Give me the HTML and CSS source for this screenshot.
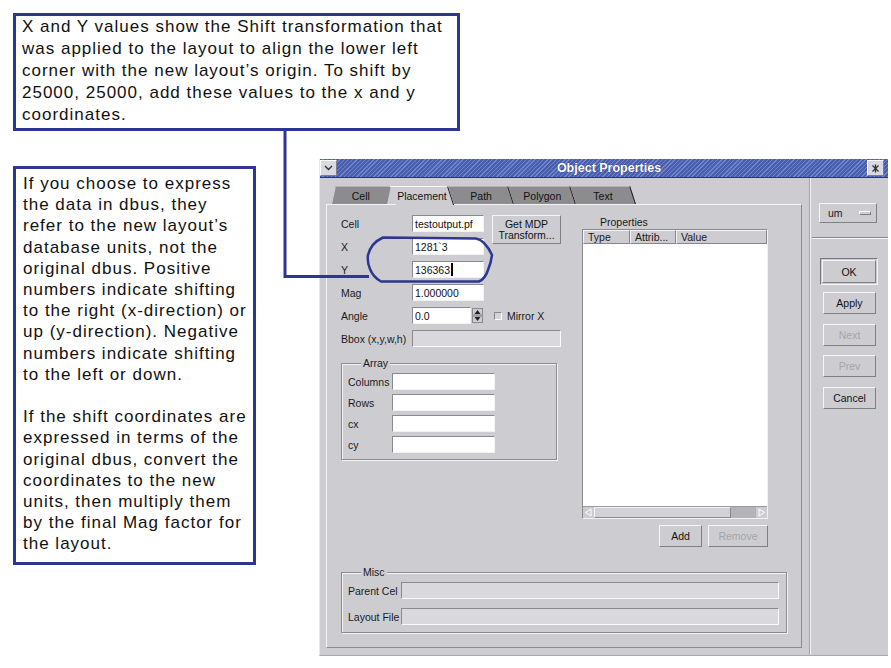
FILE: index.html
```html
<!DOCTYPE html>
<html>
<head>
<meta charset="utf-8">
<title>Object Properties</title>
<link rel="stylesheet" href="styles.css">
</head>
<body>
<div class="stage">
  <div class="note note-top">X and Y values show the Shift transformation that<br>was applied to the layout to align the lower left<br>corner with the new layout’s origin. To shift by<br>25000, 25000, add these values to the x and y<br>coordinates.</div>
  <div class="note note-left">If you choose to express<br>the data in dbus, they<br>refer to the new layout’s<br>database units, not the<br>original dbus. Positive<br>numbers indicate shifting<br>to the right (x-direction) or<br>up (y-direction). Negative<br>numbers indicate shifting<br>to the left or down.<br><br>If the shift coordinates are<br>expressed in terms of the<br>original dbus, convert the<br>coordinates to the new<br>units, then multiply them<br>by the final Mag factor for<br>the layout.</div>

  <div class="dialog">
    <div class="titlebar">
      <div class="tb-btn"><svg width="9" height="6" viewBox="0 0 9 6"><polyline points="1,1 4.5,4.5 8,1" fill="none" stroke="#333" stroke-width="1.4"/></svg></div>
      <div class="tb-title">Object Properties</div>
      <div class="tb-btn"><svg width="9" height="9" viewBox="0 0 9 9"><g stroke="#333" stroke-width="1.3"><line x1="1.5" y1="1.5" x2="7.5" y2="7.5"/><line x1="7.5" y1="1.5" x2="1.5" y2="7.5"/><line x1="4.5" y1="0.5" x2="4.5" y2="8.5"/></g></svg></div>
    </div>
    <div class="dlg-body">
      <div class="main">
        <div class="tabs">
          <div class="tab tab-first"><span class="tab-label">Cell</span></div>
          <div class="tab tab-active w58"><span class="tab-label">Placement</span></div>
          <div class="tab w60"><span class="tab-label">Path</span></div>
          <div class="tab w62"><span class="tab-label">Polygon</span></div>
          <div class="tab w60"><span class="tab-label">Text</span></div>
        </div>
        <div class="panel">
          <div class="panel-top">
            <div class="form-col">
              <div class="form-grid">
                <div class="lbl">Cell</div>
                <div class="field">testoutput.pf</div>
                <div class="btn mdp">Get MDP<br>Transform...</div>
                <div class="lbl">X</div>
                <div class="field">1281`3</div>
                <div class="lbl">Y</div>
                <div class="field">136363<span class="caret"></span></div>
                <div class="lbl">Mag</div>
                <div class="field">1.000000</div>
                <div class="lbl">Angle</div>
                <div class="angle-row">
                  <div class="field angle-in">0.0</div>
                  <div class="spin">
                    <svg width="11" height="15" viewBox="0 0 11 15"><rect x="0.5" y="0.5" width="10" height="6.5" fill="#cdcdd1" stroke="#8a8a8e"/><rect x="0.5" y="8" width="10" height="6.5" fill="#cdcdd1" stroke="#8a8a8e"/><polygon points="2.5,6 5.5,2 8.5,6" fill="#222"/><polygon points="2.5,9 8.5,9 5.5,13" fill="#222"/></svg>
                  </div>
                  <div class="check"></div>
                  <div class="check-lbl">Mirror X</div>
                </div>
                <div class="lbl">Bbox (x,y,w,h)</div>
                <div class="field field-off bbox"></div>
              </div>
              <div class="group array">
                <span class="legend">Array</span>
                <div class="array-grid">
                  <div class="lbl">Columns</div><div class="field"></div>
                  <div class="lbl">Rows</div><div class="field"></div>
                  <div class="lbl">cx</div><div class="field"></div>
                  <div class="lbl">cy</div><div class="field"></div>
                </div>
              </div>
            </div>
            <div class="props-col">
              <div class="props-label">Properties</div>
              <div class="table">
                <div class="thead">
                  <div class="th th-type">Type</div>
                  <div class="th th-attr">Attrib...</div>
                  <div class="th th-val">Value</div>
                </div>
                <div class="tbody"></div>
                <div class="hscroll">
                  <div class="arrow"><svg width="11" height="11" viewBox="0 0 11 11"><polygon points="8,2 8,9 2.5,5.5" fill="none" stroke="#fff" stroke-width="1"/></svg></div>
                  <div class="thumb"></div>
                  <div class="trough"></div>
                  <div class="arrow"><svg width="11" height="11" viewBox="0 0 11 11"><polygon points="3,2 3,9 8.5,5.5" fill="none" stroke="#fff" stroke-width="1"/></svg></div>
                </div>
              </div>
              <div class="props-btns">
                <div class="btn btn-add">Add</div>
                <div class="btn btn-remove off">Remove</div>
              </div>
            </div>
          </div>
          <div class="group misc">
            <span class="legend">Misc</span>
            <div class="misc-grid">
              <div class="lbl">Parent Cel</div><div class="field field-off"></div>
              <div class="lbl">Layout File</div><div class="field field-off"></div>
            </div>
          </div>
        </div>
      </div>
      <div class="side">
        <div class="units"><span class="units-txt">um</span><span class="units-ind"></span></div>
        <div class="side-sep"></div>
        <div class="ok-ring"><div class="btn btn-ok">OK</div></div>
        <div class="side-btns">
          <div class="btn">Apply</div>
          <div class="btn off">Next</div>
          <div class="btn off">Prev</div>
          <div class="btn">Cancel</div>
        </div>
      </div>
    </div>
  </div>

  <svg class="overlay" width="891" height="668" viewBox="0 0 891 668">
    <polyline points="285,130 285,276.5 369,276.5" fill="none" stroke="#2d3690" stroke-width="3"/>
    <path d="M383,237.5 L476,238.5 Q485,240 492,255 Q491,263 488,270 Q485,279 479,281.5 L381,281.5 Q373,277 370,269 Q367,262 368,255 Q371,243 383,237.5 Z" fill="none" stroke="#2d3690" stroke-width="2.5"/>
  </svg>
</div>
</body>
</html>
```

FILE: styles.css
```css
* { box-sizing: border-box; margin: 0; padding: 0; }
html, body { background: #fff; }
body {
  width: 891px;
  height: 668px;
  overflow: hidden;
  font-family: "Liberation Sans", Arial, Helvetica, sans-serif;
  color: #000;
}
.stage { position: relative; width: 891px; height: 668px; }

/* callouts */
.note {
  position: absolute;
  background: #fff;
  border: 3px solid #2d3690;
  font-size: 17px;
  letter-spacing: 1px;
  white-space: nowrap;
  color: #111;
}
.note-top { left: 13px; top: 13px; width: 447px; height: 118px; padding: 0 0 0 6px; line-height: 22px; }
.note-left { left: 13px; top: 166px; width: 243px; height: 399px; padding: 4px 0 0 7px; line-height: 21.2px; }

.overlay { position: absolute; left: 0; top: 0; pointer-events: none; }

/* dialog window */
.dialog {
  position: absolute;
  left: 319px;
  top: 159px;
  width: 569px;
  height: 497px;
  background: #cdcdd1;
  display: flex;
  flex-direction: column;
  font-size: 10.5px;
  color: #1a1a1a;
  border-left: 1px solid #e8e8ec;
  border-bottom: 1px solid #a8a8ac;
}
.titlebar {
  height: 19px;
  flex: none;
  display: flex;
  align-items: center;
  padding: 0 4px 0 0;
  background: repeating-linear-gradient(135deg, #4a5eae 0 2px, #7184cc 2px 3px);
  border-bottom: 1px solid #2a3570;
}
.tb-btn {
  width: 17px;
  height: 16px;
  background: #d9d9e2;
  border: 1px solid;
  border-color: #fff #7c7c90 #7c7c90 #fff;
  display: flex;
  align-items: center;
  justify-content: center;
}
.tb-title {
  flex: 1;
  text-align: center;
  padding-left: 14px;
  color: #fff;
  font-weight: bold;
  font-size: 12.5px;
  text-shadow: 0 0 1px #1c2660;
}

.dlg-body { flex: 1; display: flex; }
.main { width: 490px; padding: 8px 0 0 6px; }

/* tabs */
.tabs { display: flex; height: 18px; padding-left: 7px; position: relative; z-index: 1; }
.tab {
  height: 18px;
  background: #8c8c8e;
  border-top: 1px solid #b4b4b8;
  border-right: 1px solid #1e1e1e;
  transform: skewX(18deg);
  display: flex;
  align-items: center;
  justify-content: center;
}
.tab-label { transform: skewX(-18deg); color: #111; white-space: nowrap; }
.tab-first { width: 56px; margin-right: 4px; transform: skewX(-12deg); border-right: none; border-left: 1px solid #d8d8dc; }
.tab-first .tab-label { transform: skewX(12deg); }
.tab-active { background: #cdcdd1; border-top-color: #f4f4f6; height: 19px; margin-bottom: -1px; }
.w58 { width: 58px; }
.w60 { width: 60px; }
.w62 { width: 62px; }

.panel {
  width: 476px;
  height: 444px;
  border: 1px solid;
  border-color: #f4f4f6 #8c8c90 #8c8c90 #f4f4f6;
  padding: 10px 0 0 14px;
  display: flex;
  flex-direction: column;
}
.panel-top { display: flex; align-items: flex-start; }
.form-col { width: 221px; }

.lbl { white-space: nowrap; color: #1a1a1a; }
.field {
  height: 17px;
  background: #fff;
  border: 1px solid;
  border-color: #8a8a8e #f2f2f4 #f2f2f4 #8a8a8e;
  padding: 0 2px;
  display: flex;
  align-items: center;
  white-space: nowrap;
  color: #111;
}
.field-off { background: #d9d9dd; border-color: #8a8a8e #fafafa #fafafa #8a8a8e; }
.caret { display: inline-block; width: 2px; height: 13px; background: #000; margin-left: 1px; }

.form-grid {
  display: grid;
  grid-template-columns: 71px 72px 8px 69px;
  grid-auto-rows: 17px;
  row-gap: 6px;
  align-items: center;
}
.form-grid .lbl { grid-column: 1; }
.form-grid .field { grid-column: 2; }
.form-grid .mdp { grid-column: 4; grid-row: 1 / 3; align-self: start; height: 29px; line-height: 11px; }
.angle-row { grid-column: 2 / 5; display: flex; align-items: center; }
.form-grid .angle-in { width: 59px; }
.spin { width: 11px; height: 15px; margin-left: 1px; display: flex; }
.check {
  width: 8px;
  height: 8px;
  margin-left: 11px;
  background: #d6d6da;
  border: 1px solid;
  border-color: #88888c #fff #fff #88888c;
}
.check-lbl { margin-left: 5px; }
.form-grid .bbox { grid-column: 2 / 5; }

/* group boxes */
.group {
  position: relative;
  border: 1px solid #8c8c90;
  box-shadow: inset 1px 1px 0 #f4f4f6, 1px 1px 0 #f4f4f6;
}
.legend {
  position: absolute;
  top: -7px;
  left: 19px;
  padding: 0 2px;
  background: #cdcdd1;
  line-height: 12px;
}
.array { margin-top: 16px; width: 216px; height: 97px; padding: 9px 0 0 6px; }
.array-grid {
  display: grid;
  grid-template-columns: 44px 103px;
  grid-auto-rows: 17px;
  row-gap: 4px;
  align-items: center;
}
.misc { margin-top: 25px; width: 446px; height: 61px; padding: 9px 0 0 6px; }
.misc-grid {
  display: grid;
  grid-template-columns: 53px 378px;
  grid-auto-rows: 17px;
  row-gap: 9px;
  align-items: center;
}

/* properties */
.props-col { margin-left: 20px; width: 186px; }
.props-label { height: 14px; line-height: 14px; padding-left: 18px; }
.table {
  height: 290px;
  background: #fff;
  border: 1px solid;
  border-color: #8a8a8e #f2f2f4 #f2f2f4 #8a8a8e;
  display: flex;
  flex-direction: column;
}
.thead { height: 14px; display: flex; flex: none; }
.th {
  background: #cdcdd1;
  border: 1px solid;
  border-color: #f4f4f6 #86868a #86868a #f4f4f6;
  padding-left: 4px;
  line-height: 12px;
  white-space: nowrap;
  overflow: hidden;
}
.th-type { width: 47px; }
.th-attr { width: 46px; }
.th-val { flex: 1; }
.tbody { flex: 1; }
.hscroll { height: 12px; flex: none; display: flex; background: #b4b4b8; border-top: 1px solid #9a9a9e; }
.arrow { width: 11px; height: 11px; background: #cdcdd1; display: flex; }
.thumb {
  width: 137px;
  background: #d2d2d6;
  border: 1px solid;
  border-color: #f4f4f6 #8a8a8e #8a8a8e #f4f4f6;
}
.trough { flex: 1; }
.props-btns { margin-top: 6px; display: flex; justify-content: flex-end; gap: 6px; }

/* buttons */
.btn {
  height: 22px;
  background: #cdcdd1;
  border: 1px solid;
  border-color: #f6f6f8 #808084 #808084 #f6f6f8;
  display: flex;
  align-items: center;
  justify-content: center;
  text-align: center;
  white-space: nowrap;
  color: #111;
}
.btn.off { color: #a4a4a8; }
.btn-add { width: 43px; }
.btn-remove { width: 60px; }

/* right side */
.side {
  flex: 1;
  border-left: 1px solid #a2a2a6;
  box-shadow: inset 1px 0 0 #f4f4f6;
  padding: 25px 0 0 9px;
}
.units {
  width: 58px;
  height: 20px;
  border: 1px solid;
  border-color: #f6f6f8 #808084 #808084 #f6f6f8;
  display: flex;
  align-items: center;
  padding-left: 8px;
}
.units-txt { flex: 1; }
.units-ind {
  width: 12px;
  height: 4px;
  margin-right: 5px;
  border: 1px solid;
  border-color: #fff #808084 #808084 #fff;
}
.side-sep {
  margin: 14px 0 0 -7px;
  width: 76px;
  height: 2px;
  border-top: 1px solid #88888c;
  border-bottom: 1px solid #f6f6f8;
}
.ok-ring {
  margin-top: 19px;
  margin-left: 1px;
  width: 58px;
  height: 27px;
  border: 1px solid;
  border-color: #78787c #f4f4f6 #f4f4f6 #78787c;
  padding: 1px;
}
.btn-ok { height: 23px; }
.side-btns {
  margin: 7px 0 0 4px;
  width: 53px;
  display: flex;
  flex-direction: column;
  gap: 9.5px;
}
```
